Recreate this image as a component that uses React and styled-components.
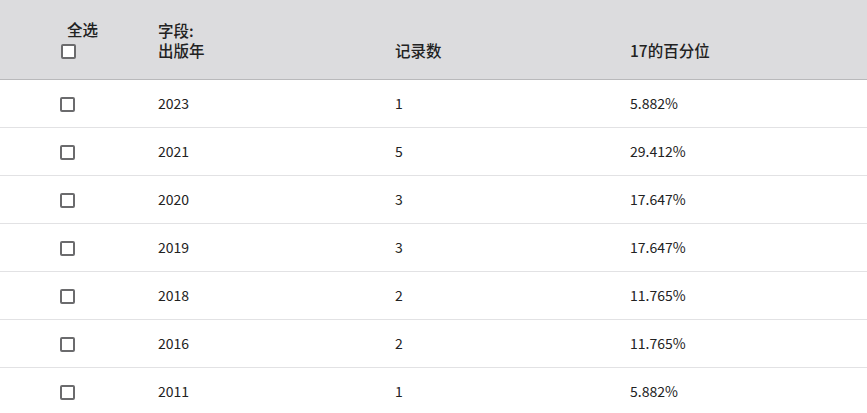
import React from 'react';
import styled, { createGlobalStyle } from 'styled-components';

const GlobalStyle = createGlobalStyle`
  body {
    margin: 0;
    background: #ffffff;
    font-family: "Noto Sans CJK SC", "Noto Sans", sans-serif;
    color: #222222;
  }
`;

const Table = styled.div`
  width: 867px;
`;

const HeaderRow = styled.div`
  display: grid;
  grid-template-columns: 158px 237px 235px 1fr;
  height: 79px;
  background: #dcdcde;
  border-bottom: 1px solid #b9b9bb;
  font-size: 15.5px;
  font-weight: 500;
  line-height: 20px;
`;

const HeaderCell = styled.div`
  display: flex;
  flex-direction: column;
  justify-content: flex-end;
  padding-bottom: 19px;
`;

const SelectAllCell = styled.div`
  display: flex;
  flex-direction: column;
  align-items: flex-start;
  padding: 19px 0 0 61px;
`;

const SelectAllLabel = styled.span`
  padding-left: 6px;
  margin-bottom: 5px;
`;

const Row = styled.div`
  display: grid;
  grid-template-columns: 158px 237px 235px 1fr;
  height: 47px;
  align-items: center;
  border-bottom: 1px solid #e2e2e4;
  font-size: 14px;
`;

const CheckCell = styled.div`
  display: flex;
  padding: 2px 0 0 60px;
`;

const Box = styled.span`
  display: inline-block;
  box-sizing: border-box;
  width: 15px;
  height: 15px;
  border: 2px solid #6b6b6d;
  border-radius: 2px;
  background: #ffffff;
`;

const Cell = styled.div`
  padding-bottom: 1px;
`;

const rows = [
  ['2023', '1', '5.882%'],
  ['2021', '5', '29.412%'],
  ['2020', '3', '17.647%'],
  ['2019', '3', '17.647%'],
  ['2018', '2', '11.765%'],
  ['2016', '2', '11.765%'],
  ['2011', '1', '5.882%'],
];

const App = () => (
  <>
    <GlobalStyle />
    <Table>
      <HeaderRow>
        <SelectAllCell>
          <SelectAllLabel>全选</SelectAllLabel>
          <Box />
        </SelectAllCell>
        <HeaderCell>
          <span>字段:</span>
          <span>出版年</span>
        </HeaderCell>
        <HeaderCell>记录数</HeaderCell>
        <HeaderCell>17的百分位</HeaderCell>
      </HeaderRow>
      {rows.map(([year, count, pct]) => (
        <Row key={year}>
          <CheckCell>
            <Box />
          </CheckCell>
          <Cell>{year}</Cell>
          <Cell>{count}</Cell>
          <Cell>{pct}</Cell>
        </Row>
      ))}
    </Table>
  </>
);

export default App;
